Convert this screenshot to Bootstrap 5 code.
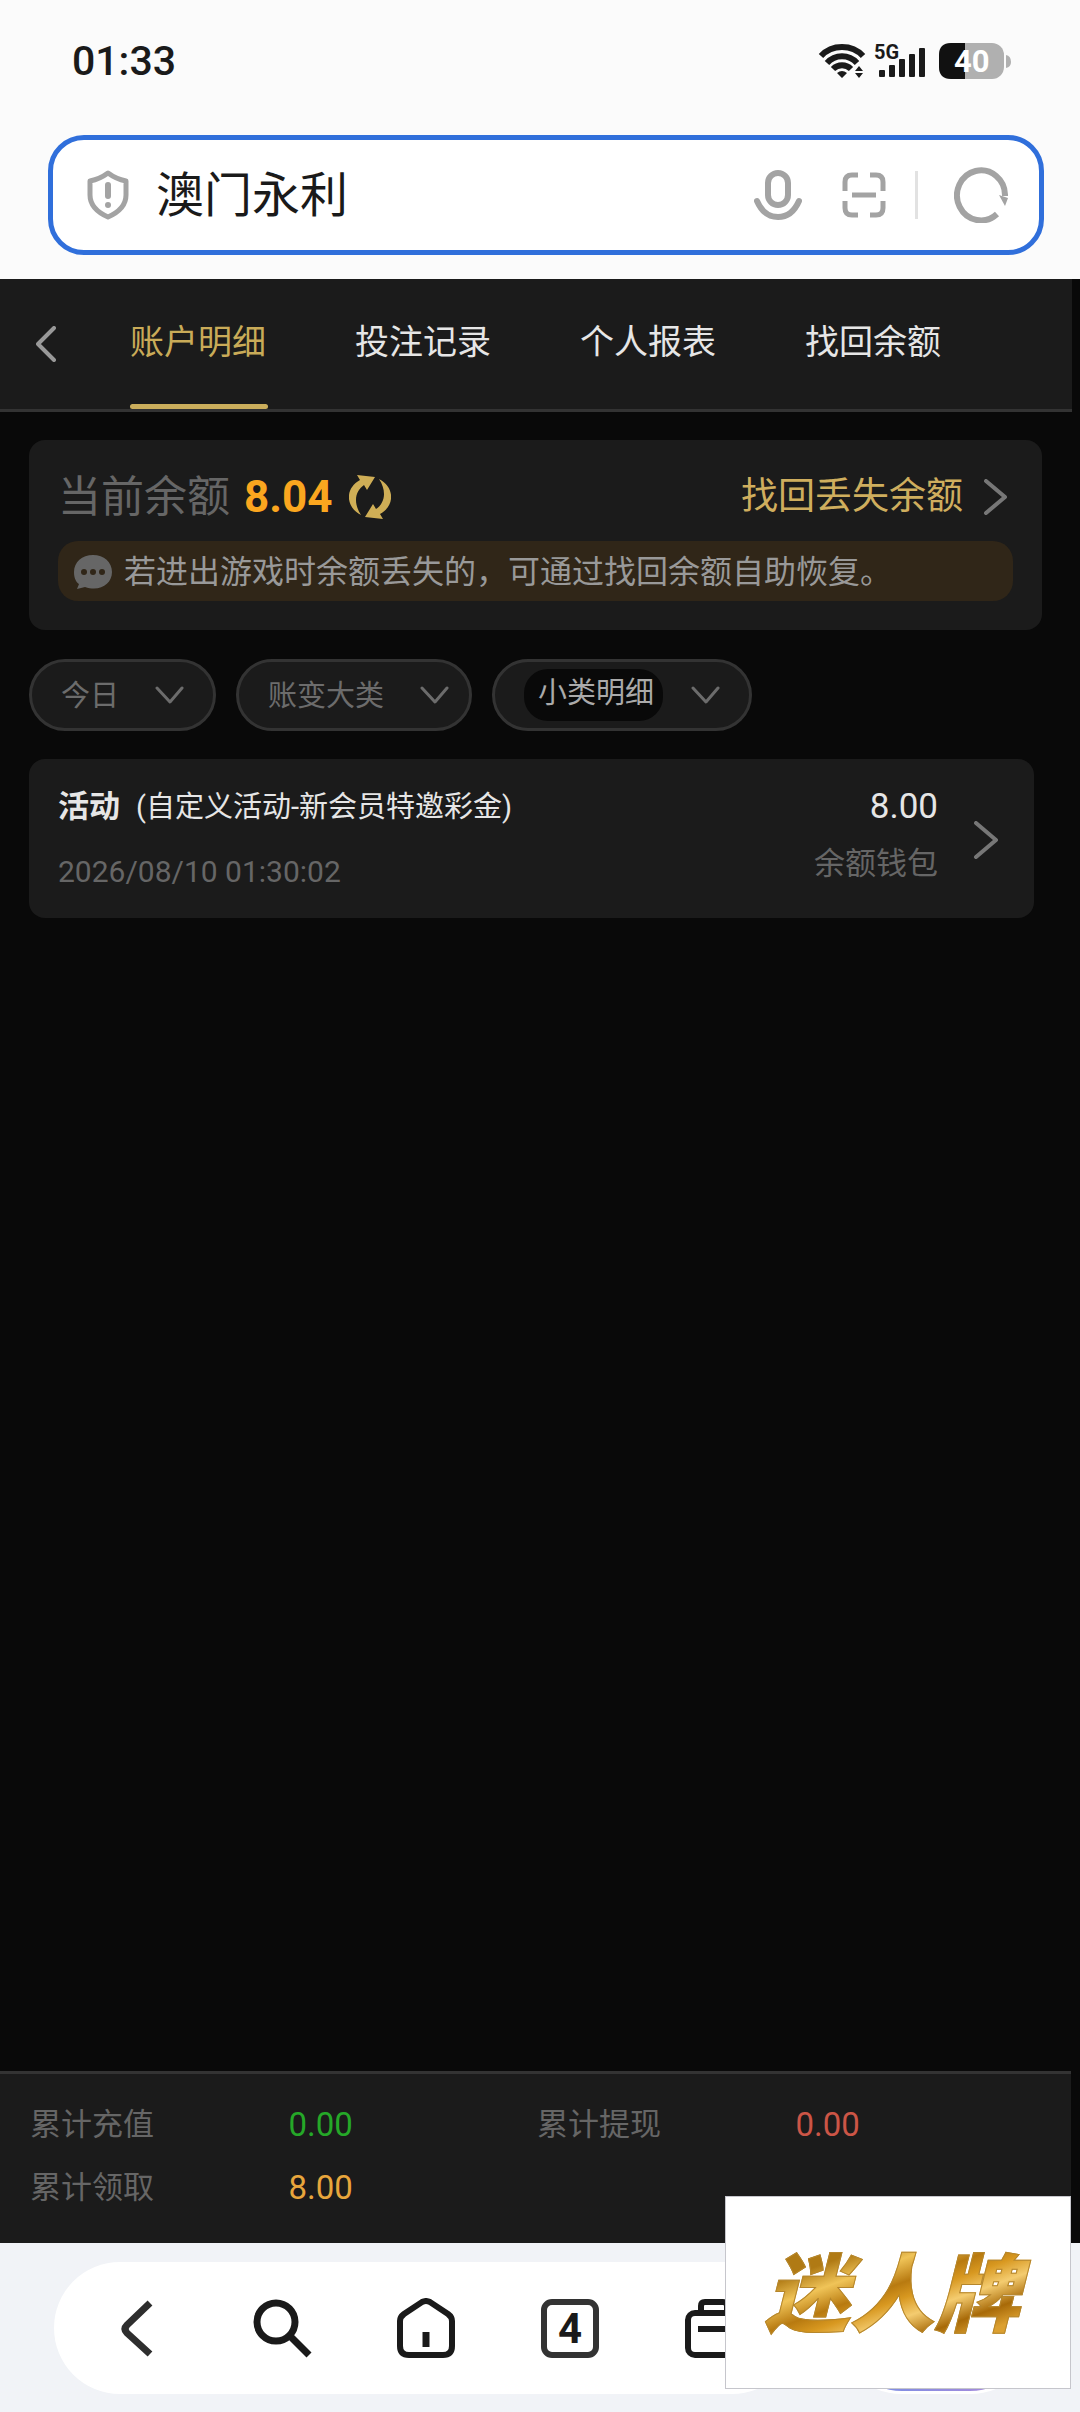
<!DOCTYPE html>
<html lang="zh-CN">

<head>
    <meta charset="UTF-8">
    <meta name="viewport" content="width=device-width, initial-scale=1">
    <title>账户明细</title>
    <link href="https://cdn.jsdelivr.net/npm/bootstrap@5.3.3/dist/css/bootstrap.min.css" rel="stylesheet">
    <style>
        body { background: #090909; color: #e6e6e6; font-family: Roboto, "Noto Sans CJK SC", sans-serif; font-size: 32px; line-height: 48px; }
        a { text-decoration: none; }
        svg { display: block; flex: none; fill: none; stroke: currentColor; }
        svg.solid { fill: currentColor; stroke: none; }
        .icon-btn { border: 0; padding: 0; background: none; color: inherit; }

        /* phone status bar and address bar */
        .browser-top { background: #fbfbfb; color: #1a1a1a; padding: 0 36px 24px 48px; }
        .status { height: 135px; padding: 0 33px 13px 24px; }
        .clock { font-size: 41px; font-weight: 500; }
        .status svg { overflow: visible; }
        .status text { font-weight: 700; stroke: none; }
        .address { height: 120px; border: 5px solid #306fdb; border-radius: 36px; padding: 0 31px 0 34px; background: #fff; color: #a3a3a3; }
        .address input { font-size: 48px; line-height: 60px; color: #1a1a1a; margin: 2px 0 0 27px; min-width: 0; }
        .address input:focus { outline: none; }
        .split { width: 3px; height: 48px; background: #e2e2e2; margin: 0 36px 0 29px; }

        /* account pages */
        .tabs-bar { background: #1b1b1b; border-bottom: 3px solid #333; margin-right: 8px; height: 133px; padding-left: 36px; }
        .tabs-bar nav { gap: 87px; margin-left: 74px; }
        .back { color: #999; }
        .tab-link { width: 138px; font-size: 34px; line-height: 48px; padding: 39px 0 38px; border-bottom: 5px solid transparent; color: #e6e6e6; white-space: nowrap; }
        .tab-link.active { color: #c9ab58; position: relative; }
        .tab-link.active::after { content: ""; position: absolute; left: 0; right: 0; bottom: -5px; height: 5px; border-radius: 3px; background: #cbae5c; }
        .panel { background: #1b1b1b; border-radius: 16px; }
        .balance { margin: 28px 38px 29px 29px; padding: 29px; }
        .balance-row { height: 53px; padding-top: 2px; }
        .balance-label { font-size: 43px; color: #666; }
        .balance-value { font-size: 44px; font-weight: 700; color: #fba61f; margin: 0 16px 0 14px; }
        .gold { color: #cfae56; }
        .gold-link { font-size: 37px; color: #cfae5e; gap: 20px; }
        .chevron { color: #777; }
        .tip { background: #302618; color: #999; border-radius: 20px; height: 60px; padding: 2px 16px 0; gap: 12px; margin-top: 19px; }
        .filters { gap: 20px; margin: 0 29px 28px; }
        .pill { height: 72px; border: 3px solid #333; border-radius: 36px; background: #1b1b1b; color: #6c6c6c; padding: 0 29px; gap: 35px; }
        .pill select { appearance: none; border: 0; background: transparent; color: inherit; font-size: 29px; line-height: 44px; padding: 1px 0 0; }
        .pill svg { pointer-events: none; }
        .pill-type { padding-right: 20px; }
        .pill-sub { gap: 28px; }
        .pill-sub select { background: #090909; color: #aaa; border-radius: 24px; padding: 2px 8px 6px 14px; }
        .record { margin: 0 46px 0 29px; padding: 24px 36px 22px 29px; color: inherit; }
        .record:hover { color: inherit; }
        .record-kind { font-size: 31px; font-weight: 700; margin-right: 16px; }
        .record-note { font-size: 29px; }
        .record-time { font-size: 30px; color: #666; margin-top: 17px; }
        .record-amount { font-size: 35px; margin-bottom: 9px; }
        .record-wallet { font-size: 31px; color: #666; }
        .totals { background: #1b1b1b; border-top: 3px solid #333; margin-right: 9px; padding: 27px 27px 31px 30px; row-gap: 15px; }
        .totals dt { width: 51%; font-size: 31px; font-weight: 400; color: #666; }
        .totals dd { margin: 0; font-size: 33px; }
        .amt-in { color: #25a828; }
        .amt-out { color: #cc5546; }
        .amt-bonus { color: #e8a63c; }

        /* browser toolbar */
        .toolbar { background: #f1f3f7; color: #1a1a1a; padding: 19px 44px 18px 54px; gap: 38px; }
        .tools { width: 744px; height: 132px; border-radius: 66px; background: #fff; padding: 0 12px; }
        .tools button { flex: 1; }
        .assistant { width: 200px; height: 132px; border-radius: 66px; border: 3px solid #fff; background: linear-gradient(90deg, #6f8fe6, #b48ad8); }
        .ad { position: fixed; right: 9px; bottom: 23px; width: 346px; height: 193px; padding-top: 6px; background: #fff; border: 1px solid #c6c6cc; }
        .ad span {
            font-size: 85px; line-height: 100px; font-weight: 900; font-style: italic; padding: 0 12px 0 0;
            background: linear-gradient(160deg, #b07a14 20%, #f0c458 32%, #b87a10 44%, #d89820 52%, #f4cc70 62%, #a86a08 74%, #dca030 84%);
            -webkit-background-clip: text; background-clip: text; color: transparent; -webkit-text-stroke: 1px #b5862c;
        }
    </style>
</head>

<body>
    <div class="d-flex flex-column min-vh-100">
        <header class="browser-top">
            <div class="status d-flex align-items-center justify-content-between">
                <span class="clock">01:33</span>
                <svg width="192" height="38" viewBox="0 0 192 38">
                    <g stroke-width="6">
                        <path d="M2 14C13 2 33 2 44 14" />
                        <path d="M8 21C16 12 30 12 38 21" />
                        <path d="M14 27C19 22 27 22 32 27" />
                    </g>
                    <g fill="currentColor" stroke="none">
                        <path d="M18 31Q23 27 28 31L23 36ZM36 29L40 24L44 29ZM36 31H44L40 36Z" />
                        <rect x="60" y="28" width="6" height="7" rx="1" />
                        <rect x="70" y="23" width="6" height="12" rx="1" />
                        <rect x="80" y="17" width="6" height="18" rx="1" />
                        <rect x="90" y="12" width="6" height="23" rx="1" />
                        <rect x="100" y="6" width="6" height="29" rx="1" />
                        <path d="M187 13Q192 14 192 20Q192 25 187 26Z" fill="#b0b0b0" />
                        <rect x="120" y="1" width="65" height="36" rx="12" fill="#b0b0b0" />
                        <path d="M146 1H132Q120 1 120 13V25Q120 37 132 37H146Z" fill="#111" />
                    </g>
                    <text x="55" y="17" font-size="20" fill="currentColor">5G</text>
                    <text x="135" y="30" font-size="31" fill="#fff">40</text>
                </svg>
            </div>
            <form class="address d-flex align-items-center">
                <svg width="42" height="50" viewBox="0 0 42 50" stroke-width="5" stroke-linejoin="round">
                    <path d="M21 3Q29 9 39 11V25Q39 39 21 47Q3 39 3 25V11Q13 9 21 3Z" />
                    <path d="M21 15V26" stroke-width="6" stroke-linecap="round" />
                    <circle cx="21" cy="35" r="3" fill="currentColor" stroke="none" />
                </svg>
                <input type="text" class="flex-grow-1 border-0 p-0 bg-transparent" value="澳门永利" aria-label="搜索或输入网址">
                <button type="button" class="icon-btn me-3" aria-label="语音">
                    <svg width="48" height="52" viewBox="0 0 48 52" stroke-width="6">
                        <rect x="14" y="4" width="20" height="32" rx="10" />
                        <path d="M3 32Q10 48 24 48T45 32" stroke-linecap="round" />
                    </svg>
                </button>
                <button type="button" class="icon-btn ms-4" aria-label="扫码">
                    <svg width="44" height="46" viewBox="0 0 44 46" stroke-width="5">
                        <path d="M3 19V10Q3 3 10 3H16M28 3H34Q41 3 41 10V19M41 29V36Q41 43 34 43H28M16 43H10Q3 43 3 36V29M10 23H34" />
                    </svg>
                </button>
                <span class="split"></span>
                <button type="button" class="icon-btn" aria-label="刷新">
                    <svg width="54" height="56" viewBox="0 0 54 56" stroke-width="6">
                        <path d="M43 47A24 25 0 1 1 51 29" />
                        <path d="M45 28L54 31L51 39Z" fill="currentColor" stroke="none" />
                    </svg>
                </button>
            </form>
        </header>

        <main class="flex-grow-1">
            <div class="tabs-bar d-flex align-items-center">
                <a href="#" class="back" aria-label="返回">
                    <svg width="20" height="36" viewBox="0 0 20 36" stroke-width="4" stroke-linecap="round" stroke-linejoin="round">
                        <path d="M18 2L2 18L18 34" />
                    </svg>
                </a>
                <nav class="d-flex">
                    <a href="#" class="tab-link active">账户明细</a>
                    <a href="#" class="tab-link">投注记录</a>
                    <a href="#" class="tab-link">个人报表</a>
                    <a href="#" class="tab-link">找回余额</a>
                </nav>
            </div>

            <section class="panel balance">
                <div class="balance-row d-flex align-items-center">
                    <span class="balance-label">当前余额</span>
                    <span class="balance-value">8.04</span>
                    <button type="button" class="icon-btn" aria-label="刷新余额">
                        <svg class="solid gold" width="42" height="44" viewBox="0 0 42 44">
                            <path id="turn" d="M8 0L26 2L18 15L15 10C6 16 4 28 12 40C-4 32 -4 13 11 5Z" />
                            <use href="#turn" transform="rotate(180 21 22)" />
                        </svg>
                    </button>
                    <a href="#" class="gold-link d-flex align-items-center ms-auto">找回丢失余额
                        <svg class="chevron" width="30" height="36" viewBox="0 0 30 36" stroke-width="4" stroke-linecap="round" stroke-linejoin="round">
                            <path d="M3 2L22 18L3 34" />
                        </svg>
                    </a>
                </div>
                <div class="tip d-flex align-items-center">
                    <svg class="solid" width="38" height="34" viewBox="0 0 38 34">
                        <path fill="#666" d="M19 0C8 0 0 7 0 17C0 23 2 27 5 29L3 34L11 32C26 37 38 29 38 17C38 7 30 0 19 0Z" />
                        <g fill="#302618">
                            <circle cx="10" cy="17" r="3" />
                            <circle cx="19" cy="17" r="3" />
                            <circle cx="28" cy="17" r="3" />
                        </g>
                    </svg>
                    <span>若进出游戏时余额丢失的，可通过找回余额自助恢复。</span>
                </div>
            </section>

            <div class="filters d-flex">
                <div class="pill d-flex align-items-center">
                    <select aria-label="日期"><option>今日</option></select>
                    <svg width="29" height="18" viewBox="0 0 29 18" stroke-width="3" stroke-linecap="round" stroke-linejoin="round"><path d="M2 2L15 16L27 2" /></svg>
                </div>
                <div class="pill pill-type d-flex align-items-center">
                    <select aria-label="账变大类"><option>账变大类</option></select>
                    <svg width="29" height="18" viewBox="0 0 29 18" stroke-width="3" stroke-linecap="round" stroke-linejoin="round"><path d="M2 2L15 16L27 2" /></svg>
                </div>
                <div class="pill pill-sub d-flex align-items-center">
                    <select aria-label="小类明细"><option>小类明细</option></select>
                    <svg width="29" height="18" viewBox="0 0 29 18" stroke-width="3" stroke-linecap="round" stroke-linejoin="round"><path d="M2 2L15 16L27 2" /></svg>
                </div>
            </div>

            <a href="#" class="panel record d-flex align-items-center">
                <div>
                    <div class="d-flex align-items-center">
                        <span class="record-kind">活动</span>
                        <span class="record-note">(自定义活动-新会员特邀彩金)</span>
                    </div>
                    <div class="record-time">2026/08/10 01:30:02</div>
                </div>
                <div class="ms-auto text-end align-self-start">
                    <div class="record-amount">8.00</div>
                    <div class="record-wallet">余额钱包</div>
                </div>
                <svg class="chevron ms-4" width="36" height="38" viewBox="0 0 36 38" stroke-width="4" stroke-linecap="round" stroke-linejoin="round">
                    <path d="M14 2L34 19L14 36" />
                </svg>
            </a>
        </main>

        <dl class="totals d-flex flex-wrap mb-0">
            <div class="w-50 d-flex">
                <dt>累计充值</dt>
                <dd class="amt-in">0.00</dd>
            </div>
            <div class="w-50 d-flex">
                <dt>累计提现</dt>
                <dd class="amt-out">0.00</dd>
            </div>
            <div class="w-50 d-flex">
                <dt>累计领取</dt>
                <dd class="amt-bonus">8.00</dd>
            </div>
        </dl>

        <footer class="toolbar d-flex">
            <div class="tools d-flex align-items-center">
                <button type="button" class="icon-btn" aria-label="后退">
                    <svg class="mx-auto" width="60" height="60" viewBox="0 0 60 60" stroke-width="7" stroke-linejoin="round">
                        <path d="M42 5L19 27Q15 31 19 35L42 56" stroke="#2e2e2e" />
                    </svg>
                </button>
                <button type="button" class="icon-btn" aria-label="搜索">
                    <svg class="mx-auto" width="60" height="60" viewBox="0 0 60 60" stroke-width="7">
                        <circle cx="24" cy="24" r="19" />
                        <path d="M38 38L57 57" />
                    </svg>
                </button>
                <button type="button" class="icon-btn" aria-label="主页">
                    <svg class="mx-auto" width="60" height="60" viewBox="0 0 60 60" stroke-width="6">
                        <path d="M26 4Q30 2 34 4L52 16Q56 19 56 23V48Q56 57 47 57H13Q4 57 4 48V23Q4 19 8 16Z" />
                        <path d="M30 34V49" stroke-width="7" />
                    </svg>
                </button>
                <button type="button" class="icon-btn" aria-label="标签页">
                    <svg class="mx-auto" width="60" height="60" viewBox="0 0 60 60" stroke-width="6">
                        <rect x="4" y="4" width="52" height="53" rx="8" stroke="#333" />
                        <text x="30" y="45" font-size="42" font-weight="700" text-anchor="middle" fill="currentColor" stroke="none">4</text>
                    </svg>
                </button>
                <button type="button" class="icon-btn" aria-label="工具箱">
                    <svg class="mx-auto" width="60" height="60" viewBox="0 0 60 60" stroke-width="6">
                        <rect x="4" y="15" width="52" height="42" rx="7" />
                        <path d="M17 15V8Q17 4 21 4H39Q43 4 43 8V15M14 31H46" />
                    </svg>
                </button>
            </div>
            <button type="button" class="assistant" aria-label="助手"></button>
        </footer>
    </div>

    <a href="#" class="ad d-flex align-items-center justify-content-center"><span>迷人牌</span></a>

    <script src="https://cdn.jsdelivr.net/npm/bootstrap@5.3.3/dist/js/bootstrap.bundle.min.js"></script>
</body>

</html>
